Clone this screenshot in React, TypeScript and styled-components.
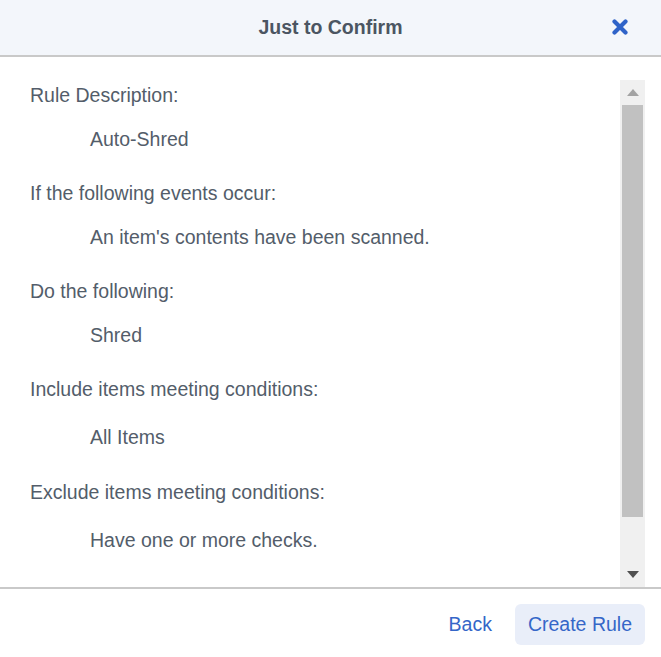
import styled, { createGlobalStyle } from "styled-components";

const GlobalStyle = createGlobalStyle`
  html, body {
    margin: 0;
    padding: 0;
    background: #ffffff;
  }
  body {
    font-family: "Liberation Sans", Arial, sans-serif;
    color: #535d6a;
  }
  * {
    box-sizing: border-box;
  }
`;

const Dialog = styled.div`
  width: 661px;
  height: 657px;
  display: flex;
  flex-direction: column;
  background: #ffffff;
`;

const Header = styled.div`
  height: 57px;
  flex-shrink: 0;
  display: flex;
  align-items: center;
  justify-content: center;
  position: relative;
  background: #f3f6fb;
  border-bottom: 2px solid #c9c9c9;
`;

const Title = styled.h1`
  margin: 0;
  font-size: 19.5px;
  font-weight: bold;
  color: #4b5562;
  line-height: 1;
`;

const CloseButton = styled.button`
  position: absolute;
  right: 29px;
  top: 17px;
  width: 24px;
  height: 20px;
  padding: 0;
  border: 0;
  background: transparent;
  cursor: pointer;
  display: flex;
  align-items: center;
  justify-content: center;
`;

const Body = styled.div`
  height: 530px;
  flex-shrink: 0;
  display: flex;
  padding: 23px 16px 0 0;
`;

const Content = styled.div`
  flex: 1;
  overflow: hidden;
  padding: 4px 0 0 30px;
  display: flex;
  flex-direction: column;
  gap: 32px;
`;

const Section = styled.div`
  display: flex;
  flex-direction: column;
  gap: 22px;
`;

const Label = styled.div`
  font-size: 19.5px;
  line-height: 22px;
`;

const Value = styled.div<{ $condition?: boolean }>`
  font-size: 19.5px;
  line-height: 22px;
  padding-left: 60px;
  padding-top: ${(p) => (p.$condition ? "4px" : "0")};
  padding-bottom: ${(p) => (p.$condition ? "1px" : "0")};
`;

const Scrollbar = styled.div`
  width: 25px;
  flex-shrink: 0;
  background: #f0f0f0;
  display: flex;
  flex-direction: column;
`;

const ArrowBox = styled.div`
  height: 25px;
  flex-shrink: 0;
  display: flex;
  align-items: center;
  justify-content: center;
`;

const Track = styled.div`
  flex: 1;
  padding: 0 2px;
`;

const Thumb = styled.div`
  height: 412px;
  background: #c1c1c1;
`;

const Footer = styled.div`
  flex: 1;
  border-top: 2px solid #c9c9c9;
  display: flex;
  justify-content: flex-end;
  align-items: flex-start;
  padding: 15px 16px 0 0;
  gap: 11px;
`;

const FooterButton = styled.button<{ $primary?: boolean }>`
  height: 41px;
  padding: 0 ${(p) => (p.$primary ? "13px" : "12px")};
  border: 0;
  border-radius: 6px;
  background: ${(p) => (p.$primary ? "#e9eef9" : "transparent")};
  color: #3566c8;
  font-family: "Liberation Sans", Arial, sans-serif;
  font-size: 19.5px;
  cursor: pointer;
`;

const rows = [
  { label: "Rule Description:", value: "Auto-Shred" },
  { label: "If the following events occur:", value: "An item's contents have been scanned." },
  { label: "Do the following:", value: "Shred" },
  { label: "Include items meeting conditions:", value: "All Items", condition: true },
  { label: "Exclude items meeting conditions:", value: "Have one or more checks.", condition: true },
];

export default function App() {
  return (
    <Dialog>
      <GlobalStyle />
      <Header>
        <Title>Just to Confirm</Title>
        <CloseButton aria-label="Close">
          <svg width="16" height="16" viewBox="0 0 16 16">
            <path
              d="M2.5 2.5 L13.5 13.5 M13.5 2.5 L2.5 13.5"
              stroke="#2f63c8"
              strokeWidth="4.2"
              strokeLinecap="round"
              fill="none"
            />
          </svg>
        </CloseButton>
      </Header>
      <Body>
        <Content>
          {rows.map((r) => (
            <Section key={r.label}>
              <Label>{r.label}</Label>
              <Value $condition={r.condition}>{r.value}</Value>
            </Section>
          ))}
        </Content>
        <Scrollbar>
          <ArrowBox>
            <svg width="12" height="7" viewBox="0 0 12 7">
              <path d="M0 7 L6 0 L12 7 Z" fill="#a3a3a3" />
            </svg>
          </ArrowBox>
          <Track>
            <Thumb />
          </Track>
          <ArrowBox>
            <svg width="12" height="7" viewBox="0 0 12 7">
              <path d="M0 0 L12 0 L6 7 Z" fill="#505050" />
            </svg>
          </ArrowBox>
        </Scrollbar>
      </Body>
      <Footer>
        <FooterButton>Back</FooterButton>
        <FooterButton $primary>Create Rule</FooterButton>
      </Footer>
    </Dialog>
  );
}
